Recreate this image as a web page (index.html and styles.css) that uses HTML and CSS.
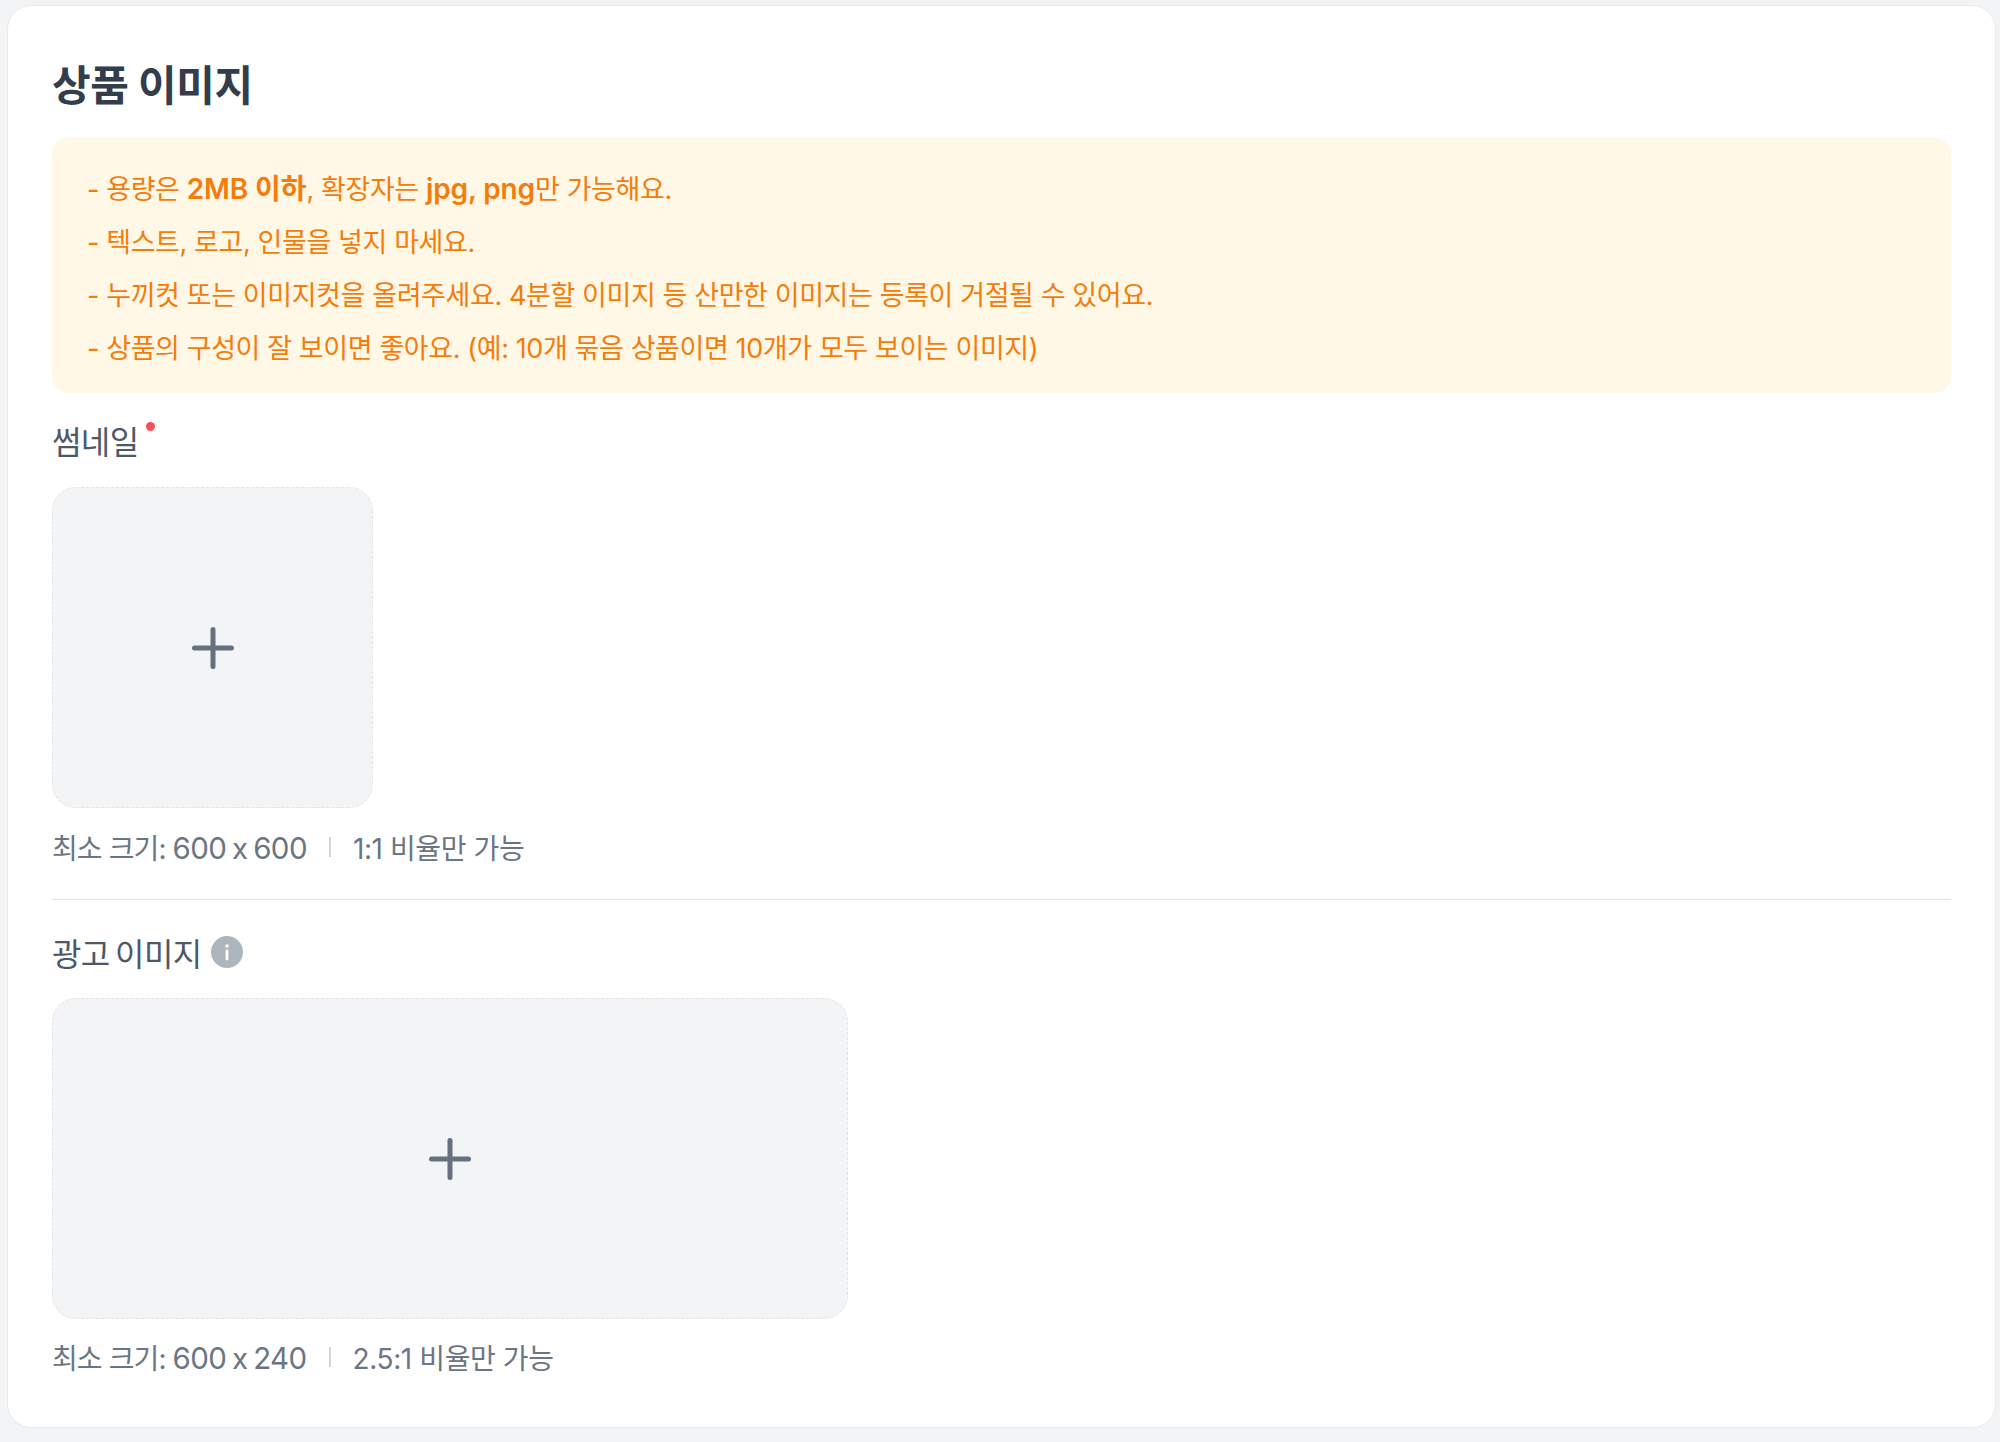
FILE: index.html
```html
<!DOCTYPE html>
<html lang="ko">
<head>
<meta charset="utf-8">
<title>상품 이미지</title>
<link rel="stylesheet" href="styles.css">
</head>
<body>
<main class="card">
  <h1 class="title">상품 이미지</h1>
  <ul class="notice">
    <li>- 용량은 <b>2MB 이하</b>, 확장자는 <b>jpg, png</b>만 가능해요.</li>
    <li>- 텍스트, 로고, 인물을 넣지 마세요.</li>
    <li>- 누끼컷 또는 이미지컷을 올려주세요. 4분할 이미지 등 산만한 이미지는 등록이 거절될 수 있어요.</li>
    <li>- 상품의 구성이 잘 보이면 좋아요. (예: 10개 묶음 상품이면 10개가 모두 보이는 이미지)</li>
  </ul>
  <section class="first">
    <div class="label">썸네일<span class="req"></span></div>
    <button class="drop square" type="button">
      <svg class="plus" viewBox="0 0 44 44"><path d="M22 3.5V40.5M3.5 22H40.5"/></svg>
    </button>
    <p class="hint"><span>최소 크기: <span class="num">600 x 600</span></span><i class="sep"></i><span class="ratio">1:1 비율만 가능</span></p>
  </section>
  <hr class="rule">
  <section class="second">
    <div class="label">광고 이미지
      <svg class="info" viewBox="0 0 32 32"><circle cx="16" cy="16" r="16" fill="#adb5bd"/><circle cx="16" cy="10" r="1.8" fill="#fff"/><path d="M16 15V23" stroke="#fff" stroke-width="2.8" stroke-linecap="round"/></svg>
    </div>
    <button class="drop wide" type="button">
      <svg class="plus" viewBox="0 0 44 44"><path d="M22 3.5V40.5M3.5 22H40.5"/></svg>
    </button>
    <p class="hint"><span>최소 크기: <span class="num">600 x 240</span></span><i class="sep"></i><span class="ratio">2.5:1 비율만 가능</span></p>
  </section>
</main>
</body>
</html>
```

FILE: styles.css
```css
* { box-sizing: border-box; }
html, body { margin: 0; height: 100%; }
body {
  background: #f2f4f6;
  padding: 5px 4px 0 7px;
  font-family: Inter, "Noto Sans CJK KR", sans-serif;
  letter-spacing: -0.6px;
}
.card {
  height: 1423px;
  background: #fff;
  border: 1px solid #e9ecef;
  border-radius: 24px;
  padding: 52px 44px 0;
}
.title {
  margin: 0;
  font-size: 42px;
  line-height: 56px;
  font-weight: 700;
  color: #333d4b;
  letter-spacing: -0.4px;
}
.notice {
  list-style: none;
  margin: 24px 0 0;
  padding: 25px 35px 18px;
  background: #fff8e6;
  border-radius: 16px;
  color: #f57c0a;
  font-size: 27px;
  line-height: 53px;
  letter-spacing: -0.4px;
}
.notice b { font-weight: 600; font-size: 28px; letter-spacing: -0.1px; }
.first { margin-top: 27px; }
.second { margin-top: 32px; }
.label {
  display: flex;
  align-items: center;
  height: 40px;
  font-size: 32px;
  word-spacing: -3px;
  color: #4e5968;
}
.req {
  align-self: flex-start;
  width: 9px;
  height: 9px;
  margin: 2px 0 0 7px;
  border-radius: 50%;
  background: #f6505f;
}
.info { width: 32px; height: 32px; margin-left: 9px; }
.drop {
  display: flex;
  align-items: center;
  justify-content: center;
  margin-top: 27px;
  padding: 0;
  background: #f2f4f6;
  border: 1px dashed #e2e5e9;
  border-radius: 24px;
}
.square { width: 321px; height: 321px; }
.wide { width: 796px; height: 321px; margin-top: 26px; }
.plus { width: 44px; height: 44px; }
.plus path { fill: none; stroke: #66717f; stroke-width: 5px; stroke-linecap: round; }
.hint {
  display: flex;
  align-items: center;
  margin: 19px 0 0;
  height: 40px;
  font-size: 28px;
  letter-spacing: -0.9px;
  color: #6b7684;
}
.second .hint { margin-top: 18px; }
.num { font-size: 29.5px; word-spacing: -2px; letter-spacing: -0.6px; }
.ratio { letter-spacing: -0.4px; }
.sep { width: 2px; height: 20px; margin: 0 22px; background: #d1d6db; }
.rule { margin: 32px 0 0; border: 0; height: 1px; background: #e5e8eb; }
```
